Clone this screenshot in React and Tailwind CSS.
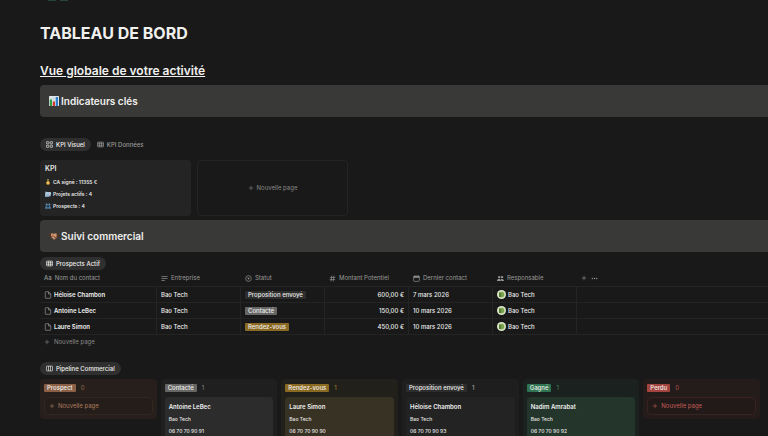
import { useId } from 'react'

const PROSPECTS = [
  { name: 'Héloise Chambon', company: 'Bao Tech', status: 'Proposition envoyé', amount: '600,00 €', date: '7 mars 2026', owner: 'Bao Tech' },
  { name: 'Antoine LeBec', company: 'Bao Tech', status: 'Contacté', amount: '150,00 €', date: '10 mars 2026', owner: 'Bao Tech' },
  { name: 'Laure Simon', company: 'Bao Tech', status: 'Rendez-vous', amount: '450,00 €', date: '10 mars 2026', owner: 'Bao Tech' },
]

const TAGS = {
  Prospect: 'bg-[#8a5f46]',
  Contacté: 'bg-[#666665]',
  'Rendez-vous': 'bg-[#8a6922]',
  'Proposition envoyé': 'bg-[#2d2d2d]',
  Gagné: 'bg-[#2f7350]',
  Perdu: 'bg-[#a4443f]',
}

const COLUMNS = [
  { status: 'Prospect', column: 'bg-[#261f1b]', count: 'text-[#9b6b50]', add: 'border-[#33261f] bg-[#241d19] text-[#b07d60]' },
  { status: 'Contacté', column: 'bg-[#1f1f1f]', count: 'text-[#8a8a88]', card: 'bg-[#2c2c2c]', person: { name: 'Antoine LeBec', phone: '06 70 70 90 91' } },
  { status: 'Rendez-vous', column: 'bg-[#22201a]', count: 'text-[#a98032]', card: 'bg-[#383224]', person: { name: 'Laure Simon', phone: '06 70 70 90 90' } },
  { status: 'Proposition envoyé', column: 'bg-[#1e1e1e]', count: 'text-[#b5b5b3]', card: 'bg-[#232323]', person: { name: 'Héloise Chambon', phone: '06 70 70 90 93' } },
  { status: 'Gagné', column: 'bg-[#1b211e]', count: 'text-[#3f8a63]', card: 'bg-[#24352b]', person: { name: 'Nadim Amrabat', phone: '06 70 70 90 92' } },
  { status: 'Perdu', column: 'bg-[#241c1b]', count: 'text-[#b0524c]', add: 'border-[#3a2220] bg-[#211a19] text-[#c25f58]' },
]

function Icon({ children, className = 'size-[7px]' }) {
  return (
    <svg viewBox="0 0 16 16" fill="none" stroke="currentColor" strokeWidth="1.5" className={`${className} shrink-0`} aria-hidden="true">
      {children}
    </svg>
  )
}

function GalleryIcon() {
  return (
    <Icon>
      <rect x="1" y="1.5" width="5.5" height="5" rx="1" />
      <rect x="9.5" y="1.5" width="5.5" height="5" rx="1" />
      <rect x="1" y="9.5" width="5.5" height="5" rx="1" />
      <rect x="9.5" y="9.5" width="5.5" height="5" rx="1" />
    </Icon>
  )
}

function TableIcon() {
  return (
    <Icon>
      <rect x="1" y="2.5" width="14" height="11" rx="1.5" />
      <path d="M1 6.2h14M1 9.8h14M5.7 2.5v11M10.3 2.5v11" />
    </Icon>
  )
}

function BoardIcon() {
  return (
    <Icon>
      <rect x="1" y="2.5" width="14" height="11" rx="1.5" />
      <path d="M5.7 2.5v11M10.3 2.5v11" />
    </Icon>
  )
}

function TextIcon() {
  return (
    <Icon>
      <path d="M1 3.5h14M1 8h14M1 12.5h8" />
    </Icon>
  )
}

function StatusIcon() {
  return (
    <Icon>
      <circle cx="8" cy="8" r="6.5" />
      <path d="M5 6.5h6L8 10.8z" fill="currentColor" stroke="none" />
    </Icon>
  )
}

function NumberIcon() {
  return (
    <Icon>
      <path d="M6.5 1.5l-2 13M11.5 1.5l-2 13M2 5.5h12.5M1.5 10.5H14" />
    </Icon>
  )
}

function CalendarIcon() {
  return (
    <Icon>
      <rect x="1.5" y="2.5" width="13" height="12" rx="1.5" />
      <path d="M1.5 4.5h13" strokeWidth="3.5" />
      <path d="M4.5 1v2M11.5 1v2" />
    </Icon>
  )
}

function PeopleIcon() {
  return (
    <Icon>
      <g fill="currentColor" stroke="none">
        <circle cx="5" cy="5" r="2.6" />
        <circle cx="11.5" cy="5" r="2.6" />
        <path d="M0 13.5c0-6 9-6 9 0zM10 13.5c0-2-.5-3-1.3-4 3-1.5 7.3 0 7.3 4z" />
      </g>
    </Icon>
  )
}

function PageIcon() {
  return (
    <Icon className="size-2 text-[#8e8e8c]">
      <path d="M3.5 1.5H9L13.5 6v7.5a1 1 0 0 1-1 1h-9a1 1 0 0 1-1-1v-11a1 1 0 0 1 1-1zM9 1.5V6h4.5" />
    </Icon>
  )
}

function PlusIcon() {
  return (
    <Icon className="size-1.5">
      <path d="M8 2v12M2 8h12" />
    </Icon>
  )
}

function DotsIcon() {
  return (
    <Icon>
      <g fill="currentColor" stroke="none">
        <circle cx="3" cy="8" r="1.5" />
        <circle cx="8" cy="8" r="1.5" />
        <circle cx="13" cy="8" r="1.5" />
      </g>
    </Icon>
  )
}

function ChartEmoji() {
  return (
    <svg viewBox="0 0 20 20" className="size-2.5 shrink-0" aria-hidden="true">
      <rect width="20" height="20" rx="1" fill="#dfe6ea" />
      <path d="M0 5h20M0 10h20M0 15h20M10 0v20" stroke="#b4c6d0" strokeWidth=".8" />
      <rect x="1.5" y="7" width="4.5" height="13" fill="#2f9e44" />
      <rect x="7.5" y="11" width="4.5" height="9" fill="#d3392f" />
      <rect x="13.5" y="2" width="4.5" height="18" fill="#2f7fd0" />
    </svg>
  )
}

function HandshakeEmoji() {
  return (
    <svg viewBox="0 0 20 20" className="size-2.5 shrink-0" aria-hidden="true">
      <path d="M3 5l7 .5L17 5v7l-5 5H9l-6-5z" fill="#8f5b41" />
      <path d="M0 4h5v8H0zM15 4h5v8h-5z" fill="#4f3529" />
      <path d="M4 5h4l-3 6H4zM8.5 5.500L15 5v6.500l-2.500.5-4-3-2 .5z" fill="#cf9870" />
      <path d="M6 12l2.500-1.500L12 15l-2 2z" fill="#dfae89" />
      <path d="M9 10.500l4 3.500M6 13l3 3" stroke="#5c3827" strokeWidth="1" />
    </svg>
  )
}

function MedalEmoji() {
  return (
    <svg viewBox="0 0 16 16" className="size-1.5 shrink-0" aria-hidden="true">
      <path d="M5 0h6L9 7H7z" fill="#8f8358" />
      <circle cx="8" cy="10.5" r="5" fill="#d9a431" />
      <circle cx="8" cy="10.5" r="2.5" fill="#f5d36b" />
    </svg>
  )
}

function FolderEmoji() {
  return (
    <svg viewBox="0 0 16 16" className="size-1.5 shrink-0" aria-hidden="true">
      <path d="M0 2h6l1.5 2H16v10H0z" fill="#7390a8" />
      <path d="M3 3h13l-2 8H2z" fill="#d5e1eb" />
      <path d="M0 7l13-1-2 9H0z" fill="#9bb8d1" />
    </svg>
  )
}

function PeopleEmoji() {
  return (
    <svg viewBox="0 0 16 16" className="size-1.5 shrink-0" aria-hidden="true">
      <circle cx="4.5" cy="4" r="3" fill="#5f91b8" />
      <circle cx="11.5" cy="4" r="3" fill="#5f91b8" />
      <path d="M0 15c0-9 7.8-9 7.8 0zM8.2 15c0-9 7.8-9 7.8 0z" fill="#477ba5" />
    </svg>
  )
}

function Avatar() {
  const clip = useId()
  return (
    <svg viewBox="0 0 18 18" className="size-[9px] shrink-0" aria-hidden="true">
      <clipPath id={clip}>
        <circle cx="9" cy="9" r="9" />
      </clipPath>
      <g clipPath={`url(#${clip})`}>
        <rect width="18" height="18" fill="#dbe7c8" />
        <path d="M4 5l6-2 4.500 3v6.500L10 15l-6-1.500z" fill="#7ba24f" />
        <path d="M4 5l4 2v7.500L4 13.500z" fill="#557a34" />
      </g>
    </svg>
  )
}

function Callout({ icon, children }) {
  return (
    <div className="flex h-8 items-center gap-0.5 rounded-l bg-[#393937] pl-[9px]">
      {icon}
      <h3 className="text-[10px] leading-4 font-semibold text-[#f0f0ee]">{children}</h3>
    </div>
  )
}

function ViewTab({ icon, active, children }) {
  return (
    <button
      className={`flex h-[13px] items-center gap-[3px] rounded-full px-1.5 font-medium ${
        active ? 'bg-[#2f2f2f] text-[#f0f0ee]' : 'text-[#9a9a98]'
      }`}
    >
      {icon}
      {children}
    </button>
  )
}

function Tag({ status }) {
  return (
    <span className={`inline-block rounded-[1px] px-[3px] leading-2 font-medium whitespace-nowrap text-[#f0f0ee] ${TAGS[status]}`}>
      {status}
    </span>
  )
}

function HeaderCell({ icon, children }) {
  return (
    <th scope="col" className="px-1 font-normal">
      <span className="flex items-center gap-[3px] whitespace-nowrap">
        {icon}
        {children}
      </span>
    </th>
  )
}

function ProspectTable() {
  return (
    <table className="w-full table-fixed border-separate border-spacing-0 text-left">
      <colgroup>
        <col className="w-[117px]" />
        <col className="w-[84px]" />
        <col className="w-[84px]" />
        <col className="w-[84px]" />
        <col className="w-[84px]" />
        <col className="w-[84px]" />
        <col />
      </colgroup>
      <thead>
        <tr className="h-4 text-[#9a9a98]">
          <HeaderCell icon={<span className="font-medium">Aa</span>}>Nom du contact</HeaderCell>
          <HeaderCell icon={<TextIcon />}>Entreprise</HeaderCell>
          <HeaderCell icon={<StatusIcon />}>Statut</HeaderCell>
          <HeaderCell icon={<NumberIcon />}>Montant Potentiel</HeaderCell>
          <HeaderCell icon={<CalendarIcon />}>Dernier contact</HeaderCell>
          <HeaderCell icon={<PeopleIcon />}>Responsable</HeaderCell>
          <td className="px-1">
            <div className="flex items-center gap-1">
              <button aria-label="Ajouter une propriété"><PlusIcon /></button>
              <button aria-label="Options"><DotsIcon /></button>
            </div>
          </td>
        </tr>
      </thead>
      <tbody>
        {PROSPECTS.map((row) => (
          <tr
            key={row.name}
            className="h-4 font-medium text-[#f0f0ee] *:border-t *:border-r *:border-[#242424] *:px-1 *:last:border-r-0"
          >
            <td>
              <span className="flex items-center gap-0.5 font-semibold">
                <PageIcon />
                {row.name}
              </span>
            </td>
            <td>{row.company}</td>
            <td>
              <span className="flex"><Tag status={row.status} /></span>
            </td>
            <td className="text-right">{row.amount}</td>
            <td>{row.date}</td>
            <td>
              <span className="flex items-center gap-0.5">
                <Avatar />
                {row.owner}
              </span>
            </td>
            <td />
          </tr>
        ))}
      </tbody>
    </table>
  )
}

function BoardColumn({ status, column, count, card, add, person }) {
  return (
    <section className={`self-start rounded p-1 ${column}`}>
      <div className="flex h-2.5 items-center gap-[5px]">
        <Tag status={status} />
        <span className={count}>{person ? 1 : 0}</span>
      </div>
      {person ? (
        <article className={`mt-1 h-16 rounded px-1 pt-1.5 ${card}`}>
          <h4 className="leading-2 font-semibold text-[#f0f0ee]">{person.name}</h4>
          <p className="mt-1 text-[5px] font-medium text-[#e6e6e4]">Bao Tech</p>
          <p className="mt-1 text-[5px] font-medium text-[#e6e6e4]">{person.phone}</p>
        </article>
      ) : (
        <button className={`mt-1 flex h-[18px] w-full items-center gap-[3px] rounded border px-1 ${add}`}>
          <PlusIcon />
          Nouvelle page
        </button>
      )}
    </section>
  )
}

export default function App() {
  return (
    <main className="h-screen overflow-hidden bg-[#191919] pl-10 font-['Inter',sans-serif] text-[6px] leading-2 text-[#e6e6e4]">
      <div className="flex h-[21px] gap-1 pl-2">
        <span className="h-px w-2 bg-[#24463a]" />
        <span className="h-px w-2 bg-[#24463a]" />
      </div>
      <h1 className="text-[16px] leading-6 font-bold text-[#f0f0ee]">TABLEAU DE BORD</h1>
      <h2 className="mt-[18px] mb-1.5 text-[12px] leading-4 font-semibold text-[#f0f0ee] underline">
        Vue globale de votre activité
      </h2>
      <Callout icon={<ChartEmoji />}>Indicateurs clés</Callout>

      <nav className="mt-[21px] flex">
        <ViewTab icon={<GalleryIcon />} active>KPI Visuel</ViewTab>
        <ViewTab icon={<TableIcon />}>KPI Données</ViewTab>
      </nav>
      <div className="mt-[9px] mb-1 flex h-14 gap-1.5">
        <article className="w-[151px] rounded bg-[#242424] px-[5px] pt-[5px]">
          <h4 className="text-[7px] leading-2 font-semibold">KPI</h4>
          <ul className="mt-[5px] flex flex-col gap-1 text-[5px] leading-2 font-semibold">
            <li className="flex items-center gap-0.5"><MedalEmoji />CA signé : 11355 €</li>
            <li className="flex items-center gap-0.5"><FolderEmoji />Projets actifs : 4</li>
            <li className="flex items-center gap-0.5"><PeopleEmoji />Prospects : 4</li>
          </ul>
        </article>
        <button className="flex w-[151px] items-center justify-center gap-[3px] rounded border border-[#242424] text-[#8a8a88]">
          <PlusIcon />
          Nouvelle page
        </button>
      </div>
      <Callout icon={<HandshakeEmoji />}>Suivi commercial</Callout>

      <nav className="mt-[5px] flex">
        <ViewTab icon={<TableIcon />} active>Prospects Actif</ViewTab>
      </nav>
      <ProspectTable />
      <button className="flex h-3.5 w-full items-center gap-1 border-t border-[#242424] px-1 text-[#8a8a88]">
        <PlusIcon />
        Nouvelle page
      </button>

      <nav className="mt-3.5 flex">
        <ViewTab icon={<BoardIcon />} active>Pipeline Commercial</ViewTab>
      </nav>
      <div className="mt-1 grid grid-cols-6 gap-1 pr-2">
        {COLUMNS.map((column) => (
          <BoardColumn key={column.status} {...column} />
        ))}
      </div>
    </main>
  )
}
